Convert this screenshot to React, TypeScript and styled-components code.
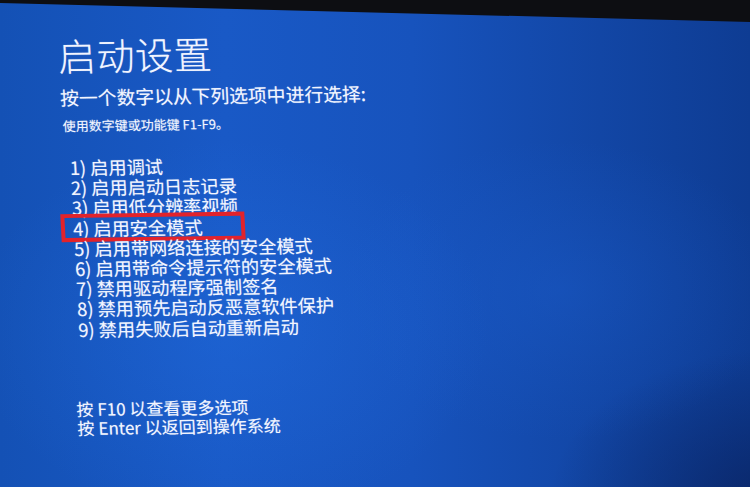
import styled, { createGlobalStyle } from 'styled-components'

const options = [
  '启用调试',
  '启用启动日志记录',
  '启用低分辨率视频',
  '启用安全模式',
  '启用带网络连接的安全模式',
  '启用带命令提示符的安全模式',
  '禁用驱动程序强制签名',
  '禁用预先启动反恶意软件保护',
  '禁用失败后自动重新启动'
]

const GlobalStyle = createGlobalStyle`
  html, body {
    margin: 0;
    padding: 0;
    background: #0d0e12;
  }
`

export default function App() {
  return (
    <>
      <GlobalStyle />
      <Screen>
        <Content>
          <Title>启动设置</Title>
          <Prompt>按一个数字以从下列选项中进行选择:</Prompt>
          <Hint>使用数字键或功能键 F1-F9。</Hint>
          <OptionList>
            {options.map((text, i) => (
              <Option key={i} $active={i === 3}>
                {i + 1}) {text}
              </Option>
            ))}
          </OptionList>
          <Footer>
            <FooterLine>按 F10 以查看更多选项</FooterLine>
            <FooterLine>按 Enter 以返回到操作系统</FooterLine>
          </Footer>
        </Content>
      </Screen>
    </>
  )
}

const Screen = styled.div`
  width: 750px;
  height: 487px;
  overflow: hidden;
  clip-path: polygon(0 3px, 100% 22px, 100% 100%, 0 100%);
  background:
    radial-gradient(ellipse 260px 190px at 230px 330px, rgba(34, 110, 225, 0.4), rgba(34, 110, 225, 0) 100%),
    radial-gradient(ellipse 220px 150px at 560px 290px, rgba(28, 96, 210, 0.35), rgba(28, 96, 210, 0) 100%),
    radial-gradient(ellipse 220px 150px at 770px 500px, rgba(8, 28, 84, 0.65), rgba(8, 28, 84, 0) 100%),
    linear-gradient(90deg, #1451b5 0%, #1959c6 30%, #1753bd 55%, #1246a5 80%, #0e3c93 100%);
  font-family: 'Noto Sans CJK SC', 'Liberation Sans', sans-serif;
  color: #f2f5ff;
`

const Content = styled.div`
  padding: 35px 0 0 55px;
  transform-origin: 0 0;
  transform: rotate(-0.8deg) skewX(2.2deg);
  text-shadow: 0 0 1px rgba(255, 255, 255, 0.45);
`

const Title = styled.h1`
  margin: 0;
  font-size: 38px;
  line-height: 42px;
  font-weight: 300;
  letter-spacing: 0.5px;
`

const Prompt = styled.div`
  margin-top: 9px;
  font-size: 18.8px;
  line-height: 24px;
`

const Hint = styled.div`
  margin-top: 9px;
  font-size: 13px;
  line-height: 16px;
  padding-left: 1px;
`

const OptionList = styled.div`
  margin-top: 23px;
  padding-left: 6px;
  display: flex;
  flex-direction: column;
`

const Option = styled.div<{ $active?: boolean }>`
  font-size: 18.2px;
  line-height: 20.2px;
  white-space: nowrap;
  width: ${p => (p.$active ? '176px' : 'auto')};
  margin-left: ${p => (p.$active ? '-8px' : '0')};
  padding-left: ${p => (p.$active ? '8px' : '0')};
  box-sizing: border-box;
  outline: ${p => (p.$active ? '4px solid #e2232b' : 'none')};
  outline-offset: 0;
`

const Footer = styled.div`
  margin-top: 60px;
  display: flex;
  flex-direction: column;
`

const FooterLine = styled.div`
  font-size: 17px;
  line-height: 19.5px;
`
